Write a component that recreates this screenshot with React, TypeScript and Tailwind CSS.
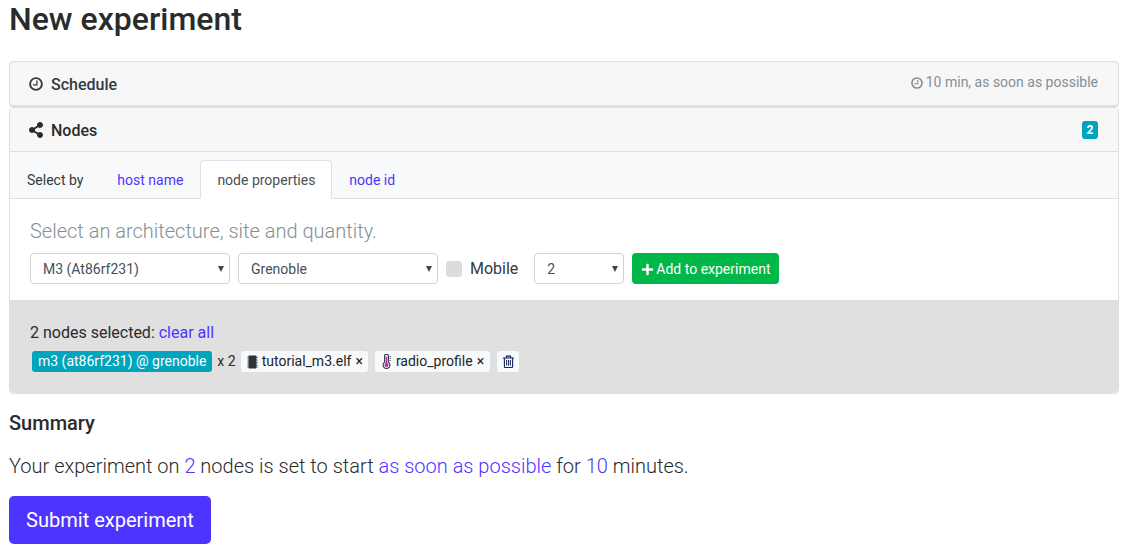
import { FaPlus, FaShareAlt } from 'react-icons/fa';

function ClockIcon({ size }: { size: string }) {
  return (
    <svg viewBox="0 0 14 14" className={size} fill="none" stroke="currentColor">
      <circle cx="7" cy="7" r="5.9" strokeWidth="1.9" />
      <path d="M3.9 7.9H7.9V3.4" strokeWidth="1.3" />
    </svg>
  );
}

function ChipIcon() {
  return (
    <svg viewBox="0 0 13 14" className="w-[13px] h-[14px] shrink-0">
      <path d="M1 2.5H12M1 5H12M1 7.5H12M1 10H12M1 12H12" stroke="#6b6f75" strokeWidth="0.8" />
      <rect x="2.5" y="0.5" width="8" height="13" rx="0.8" fill="#2f3338" />
    </svg>
  );
}

function ThermometerIcon() {
  return (
    <svg viewBox="0 0 13 15" className="w-[13px] h-[15px] shrink-0" fill="none">
      <path d="M4.6 2a1.9 1.9 0 0 1 3.8 0V8.2a3.4 3.4 0 1 1-3.8 0Z" stroke="#3b3550" strokeWidth="1.1" />
      <path d="M6.5 2.6V10" stroke="#a8389a" strokeWidth="1.7" />
      <circle cx="6.5" cy="11" r="2" fill="#a8389a" />
      <path d="M9.6 2.5H11M9.6 4.5H11M9.6 6.5H11" stroke="#3b3550" strokeWidth="0.8" />
    </svg>
  );
}

function TrashIcon() {
  return (
    <svg viewBox="0 0 11 13" className="w-[11px] h-[13px]" fill="none" stroke="#14245e">
      <path d="M0 3H11M3.5 3V1.1H7.5V3" strokeWidth="1.2" />
      <path d="M1.4 3V11.6A0.9 0.9 0 0 0 2.3 12.5H8.7A0.9 0.9 0 0 0 9.6 11.6V3" strokeWidth="1.1" />
      <path d="M3.6 5V10.6M5.5 5V10.6M7.4 5V10.6" strokeWidth="1" />
    </svg>
  );
}

function Caret() {
  return <span className="ml-auto w-0 h-0 border-x-[3.5px] border-x-transparent border-t-[6px] border-t-[#444]" />;
}

function FakeSelect({ label, width }: { label: string; width: string }) {
  return (
    <div className={`${width} h-[31px] flex items-center pl-[12px] pr-[5px] bg-white border border-[#ced4da] rounded-[4px] text-[14px] text-[#495057]`}>
      <span className="pt-[2px]">{label}</span>
      <Caret />
    </div>
  );
}

function Tag({ icon, label, extra }: { icon: React.ReactNode; label: string; extra?: string }) {
  return (
    <span className={`h-[21px] flex items-center gap-[3px] pl-[5px] pr-[5px] bg-[#f8f9fa] rounded-[3px] text-[14px] text-[#212529] ${extra ?? ''}`}>
      {icon}
      {label} <span className="ml-[1px]">×</span>
    </span>
  );
}

export default function App() {
  return (
    <div className="h-[557px] overflow-hidden bg-white px-[9px] font-['Roboto',sans-serif] text-[#292b2c]">
      <h1 className="h-[61px] text-[32px] leading-[38px] font-medium">New experiment</h1>

      <div className="w-[1110px] h-[46px] flex items-center px-[20px] bg-[#f7f7f7] border border-[#dfdfdf] border-b-2 rounded-[4px] text-[#343a40]">
        <ClockIcon size="-ml-[1px] w-[14px] h-[14px] mr-[8px]" />
        <span className="pt-[2px] text-[16px] font-medium">Schedule</span>
        <span className="ml-auto pb-[2px] flex items-center gap-[3px] text-[14px] text-[#868e96]">
          <ClockIcon size="w-[12px] h-[12px]" />
          10 min, as soon as possible
        </span>
      </div>

      <div className="w-[1110px] h-[287px] flex flex-col bg-white border border-[#dfdfdf] rounded-[4px]">
        <div className="h-[44px] shrink-0 flex items-center px-[20px] bg-[#f7f7f7] border-b border-[#dfdfdf]">
          <FaShareAlt className="-ml-[2px] mt-[1px] w-[16px] h-[16px] mr-[7px]" />
          <span className="pt-[2px] text-[16px] font-medium">Nodes</span>
          <span className="ml-auto w-[16px] h-[18px] flex items-center justify-center bg-[#00a4bd] rounded-[3px] text-[12px] font-bold text-white">2</span>
        </div>

        <div className="h-[47px] shrink-0 flex items-end pl-[17px] bg-[#f8f9fa] border-b border-[#dee2e6] text-[14px]">
          <span className="h-[35px] flex items-center text-[#343a40]">Select by</span>
          <span className="h-[35px] flex items-center ml-[34px] text-[#4d35ff]">host name</span>
          <span className="h-[39px] -mb-px pt-[1px] flex items-center ml-[17px] px-[16px] bg-white border border-[#dee2e6] border-b-white rounded-t-[4px] text-[#495057]">node properties</span>
          <span className="h-[35px] flex items-center ml-[17px] text-[#4d35ff]">node id</span>
        </div>

        <div className="h-[101px] shrink-0 pl-[20px] pt-[20px]">
          <p className="text-[20px] leading-[24px] font-light text-[#868e96]">Select an architecture, site and quantity.</p>
          <div className="flex items-center mt-[10px]">
            <FakeSelect label="M3 (At86rf231)" width="w-[200px]" />
            <div className="w-[8px]" />
            <FakeSelect label="Grenoble" width="w-[200px]" />
            <span className="ml-[8px] w-[16px] h-[16px] bg-[#dcdcdc] rounded-[3px]" />
            <span className="ml-[8px] text-[16px] text-[#343a40]">Mobile</span>
            <div className="w-[16px]" />
            <FakeSelect label="2" width="w-[90px]" />
            <button className="ml-[8px] h-[31px] pt-[2px] flex items-center gap-[2px] px-[9px] bg-[#00b74a] rounded-[4px] text-[14px] text-white">
              <FaPlus className="w-[13px] h-[13px]" />
              Add to experiment
            </button>
          </div>
        </div>

        <div className="flex-1 bg-[#e0e0e0] pl-[20px] pt-[23px] rounded-b-[4px]">
          <p className="text-[16px] leading-[20px]">
            2 nodes selected: <span className="text-[#4d35ff]">clear all</span>
          </p>
          <div className="flex items-center mt-[8px] ml-[2px] text-[14px]">
            <span className="h-[21px] flex items-center px-[6px] bg-[#00a4bd] rounded-[3px] text-white">m3 (at86rf231) @ grenoble</span>
            <span className="ml-[5px] mr-[5px]">x 2</span>
            <Tag icon={<ChipIcon />} label="tutorial_m3.elf" />
            <div className="w-[7px]" />
            <Tag icon={<ThermometerIcon />} label="radio_profile" extra="pr-[6px]" />
            <span className="ml-[7px] w-[22px] h-[21px] flex items-center justify-center bg-[#f8f9fa] rounded-[3px]">
              <TrashIcon />
            </span>
          </div>
        </div>
      </div>

      <h2 className="mt-[17px] text-[20px] leading-[24px] font-medium">Summary</h2>
      <p className="mt-[19px] text-[20px] leading-[24px] font-light">
        Your experiment on <span className="text-[#4d35ff]">2</span> nodes is set to start <span className="text-[#4d35ff]">as soon as possible</span> for <span className="text-[#4d35ff]">10</span> minutes.
      </p>
      <button className="mt-[18px] w-[202px] h-[48px] bg-[#4d35ff] rounded-[5px] text-[20px] text-white">Submit experiment</button>
    </div>
  );
}
